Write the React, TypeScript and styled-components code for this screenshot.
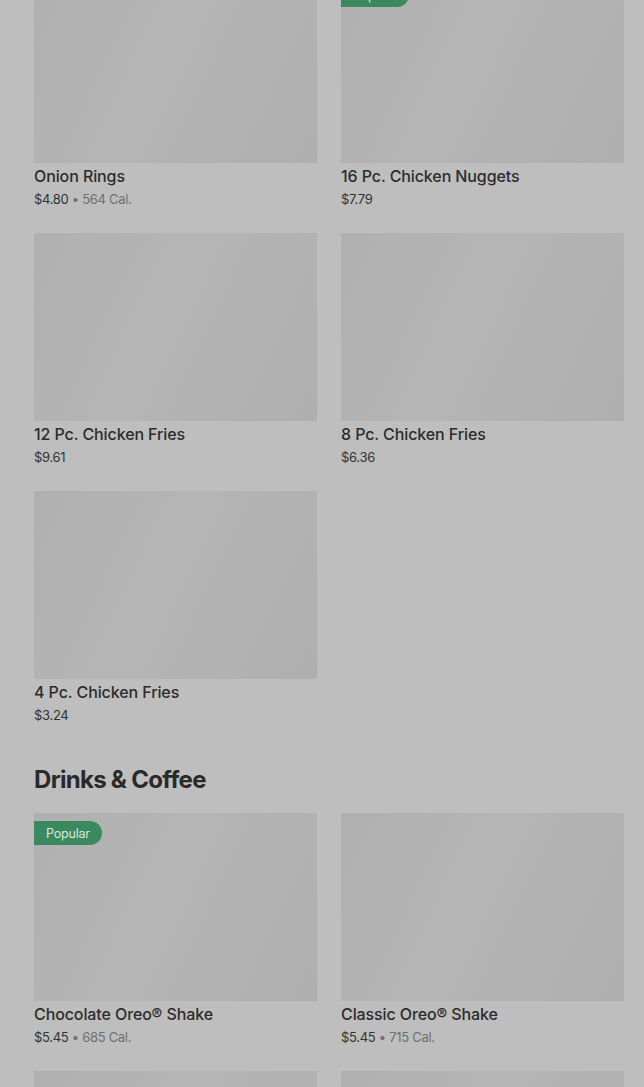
import styled, { createGlobalStyle } from "styled-components";

interface MenuItem {
    name?: string;
    price?: string;
    cal?: string;
    popular?: boolean;
}

const GlobalStyle = createGlobalStyle`
    html, body {
        margin: 0;
        padding: 0;
        background: #bebebe;
        overflow: hidden;
    }
    body {
        font-family: Inter, "Noto Sans", sans-serif;
        color: #2c2c2c;
    }
`;

const Page = styled.div`
    padding: 0 20px 0 34px;
    margin-top: -25px;
    height: 1112px;
    overflow: hidden;
`;

const Section = styled.section`
    margin-bottom: 39px;
`;

const Heading = styled.h2`
    margin: 0 0 17px;
    font-size: 24px;
    line-height: 32px;
    font-weight: 700;
    letter-spacing: -0.7px;
    color: #2a2a2a;
`;

const Grid = styled.div`
    display: grid;
    grid-template-columns: 283px 283px;
    column-gap: 24px;
    row-gap: 24px;
`;

const Card = styled.div`
    display: flex;
    flex-direction: column;
`;

const Thumb = styled.div`
    position: relative;
    height: 188px;
    background: linear-gradient(115deg, #b0b0b0 0%, #b5b5b5 45%, #b2b2b2 70%, #afafaf 100%);
`;

const Badge = styled.span`
    position: absolute;
    top: 8px;
    left: 0;
    height: 24px;
    padding: 0 12px;
    display: flex;
    align-items: center;
    background: #3b8a5f;
    color: #d8e8de;
    font-size: 12.5px;
    letter-spacing: -0.2px;
    border-radius: 0 12px 12px 0;
`;

const Name = styled.div`
    margin-top: 3px;
    font-size: 16px;
    line-height: 20px;
    font-weight: 500;
    letter-spacing: -0.1px;
    color: #2c2c2c;
`;

const Meta = styled.div`
    margin-top: 3px;
    font-size: 13px;
    line-height: 20px;
    color: #333;
    letter-spacing: -0.3px;
`;

const Cal = styled.span`
    color: #707070;
`;

const chicken: MenuItem[] = [
    { name: "Onion Rings", price: "$4.80", cal: "564 Cal." },
    { name: "16 Pc. Chicken Nuggets", price: "$7.79", popular: true },
    { name: "12 Pc. Chicken Fries", price: "$9.61" },
    { name: "8 Pc. Chicken Fries", price: "$6.36" },
    { name: "4 Pc. Chicken Fries", price: "$3.24" },
];

// last row is only peeking in at the bottom edge
const drinks: MenuItem[] = [
    { name: "Chocolate Oreo® Shake", price: "$5.45", cal: "685 Cal.", popular: true },
    { name: "Classic Oreo® Shake", price: "$5.45", cal: "715 Cal." },
    {},
    {},
];

const ItemCard: React.FC<{ item: MenuItem }> = ({ item }) => (
    <Card>
        <Thumb>{item.popular && <Badge>Popular</Badge>}</Thumb>
        {item.name && <Name>{item.name}</Name>}
        {item.price && (
            <Meta>
                {item.price}
                {item.cal && <Cal> • {item.cal}</Cal>}
            </Meta>
        )}
    </Card>
);

export default function App() {
    return (
        <>
            <GlobalStyle />
            <Page>
                <Section>
                    <Grid>
                        {chicken.map((it, i) => (
                            <ItemCard key={i} item={it} />
                        ))}
                    </Grid>
                </Section>
                <Section>
                    <Heading>Drinks &amp; Coffee</Heading>
                    <Grid>
                        {drinks.map((it, i) => (
                            <ItemCard key={i} item={it} />
                        ))}
                    </Grid>
                </Section>
            </Page>
        </>
    );
}
